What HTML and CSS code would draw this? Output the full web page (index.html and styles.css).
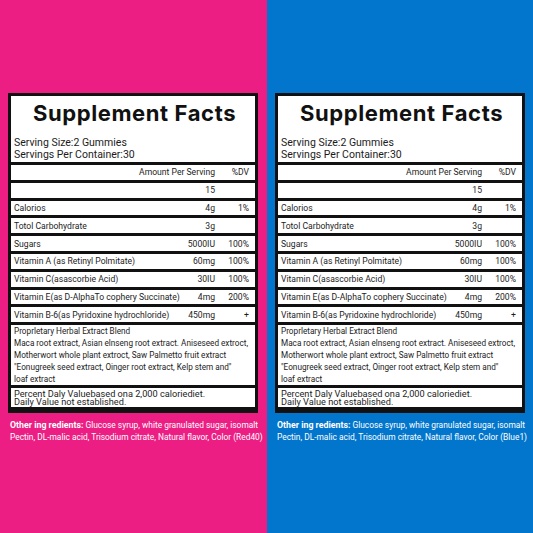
FILE: index.html
```html
<!DOCTYPE html>
<html lang="en">
<head>
    <meta charset="UTF-8">
    <meta name="viewport" content="width=device-width, initial-scale=1.0">
    <title>Supplement Facts</title>
    <link rel="stylesheet" href="styles.css">
</head>
<body>

<div class="page">
    <section class="half pink">
        <div class="facts">
            <div class="box head">
                <h1>Supplement Facts</h1>
                <p class="serving">Serving Size:2 Gummies<br>Servings Per Container:30</p>
            </div>
            <div class="box row"><span></span><span>Amount Per Serving</span><span>%DV</span></div>
            <div class="box row"><span></span><span>15</span><span></span></div>
            <div class="box row"><span>Calorios</span><span>4g</span><span>1%</span></div>
            <div class="box row"><span>Totol Carbohydrate</span><span>3g</span><span></span></div>
            <div class="box row"><span>Sugars</span><span>5000IU</span><span>100%</span></div>
            <div class="box row"><span>Vitamin A (as Retinyl Polmitate)</span><span>60mg</span><span>100%</span></div>
            <div class="box row"><span>Vitamin C(asascorbie Acid)</span><span>30IU</span><span>100%</span></div>
            <div class="box row"><span>Vitamin E(as D-AlphaTo cophery Succinate)</span><span>4mg</span><span>200%</span></div>
            <div class="box row"><span>Vitamin B-6(as Pyridoxine hydrochloride)</span><span>450mg</span><span>+</span></div>
            <div class="box blend">
                Proprletary Herbal Extract Blend<br>
                Maca root extract, Asian elnseng root extract. Aniseseed extroct,<br>
                Motherwort whole plant extroct, Saw Palmetto fruit extract<br>
                "Eonugreek seed extract, Oinger root extract, Kelp stem and"<br>
                loaf extract
            </div>
            <div class="box note">Percent Daly Valuebased ona 2,000 caloriediet.<br>Daily Value not established.</div>
        </div>
        <p class="other"><b>Other ing redients:</b> Glucose syrup, white granulated sugar, isomalt<br>Pectin, DL-malic acid, Trisodium citrate, Natural flavor, Color (Red40)</p>
    </section>

    <section class="half blue">
        <div class="facts">
            <div class="box head">
                <h1>Supplement Facts</h1>
                <p class="serving">Serving Size:2 Gummies<br>Servings Per Container:30</p>
            </div>
            <div class="box row"><span></span><span>Amount Per Serving</span><span>%DV</span></div>
            <div class="box row"><span></span><span>15</span><span></span></div>
            <div class="box row"><span>Calorios</span><span>4g</span><span>1%</span></div>
            <div class="box row"><span>Totol Carbohydrate</span><span>3g</span><span></span></div>
            <div class="box row"><span>Sugars</span><span>5000IU</span><span>100%</span></div>
            <div class="box row"><span>Vitamin A (as Retinyl Polmitate)</span><span>60mg</span><span>100%</span></div>
            <div class="box row"><span>Vitamin C(asascorbie Acid)</span><span>30IU</span><span>100%</span></div>
            <div class="box row"><span>Vitamin E(as D-AlphaTo cophery Succinate)</span><span>4mg</span><span>200%</span></div>
            <div class="box row"><span>Vitamin B-6(as Pyridoxine hydrochloride)</span><span>450mg</span><span>+</span></div>
            <div class="box blend">
                Proprletary Herbal Extract Blend<br>
                Maca root extract, Asian elnseng root extract. Aniseseed extroct,<br>
                Motherwort whole plant extroct, Saw Palmetto fruit extract<br>
                "Eonugreek seed extract, Oinger root extract, Kelp stem and"<br>
                loaf extract
            </div>
            <div class="box note">Percent Daly Valuebased ona 2,000 caloriediet.<br>Daily Value not established.</div>
        </div>
        <p class="other"><b>Other ing redients:</b> Glucose syrup, white granulated sugar, isomalt<br>Pectin, DL-malic acid, Trisodium citrate, Natural flavor, Color (Blue1)</p>
    </section>
</div>

</body>
</html>
```

FILE: styles.css
```css
* {
    box-sizing: border-box;
}
body {
    margin: 0;
    font-family: Roboto, "Noto Sans", sans-serif;
    color: #1c1c1c;
}
.page {
    display: flex;
    width: 533px;
    height: 533px;
}
.half {
    flex: none;
    width: 50%;
    min-width: 0;
    padding: 93px 8.5px 0 8px;
}
.pink {
    background-color: #ec1e84;
}
.blue {
    background-color: #0176cc;
    padding-left: 8.5px;
    padding-right: 8px;
}
.facts {
    background-color: #111;
    padding: 3px 3px 6px;
    display: flex;
    flex-direction: column;
    gap: 3px;
}
.box {
    background-color: #fff;
}
.head {
    height: 66px;
    padding-left: 3px;
}
.head h1 {
    margin: 1px 0 7px;
    text-align: center;
    font-family: Inter, "Noto Sans", sans-serif;
    font-size: 22px;
    font-weight: 700;
    letter-spacing: 0.6px;
    line-height: 33px;
    color: #111;
}
.serving {
    margin: 0;
    font-size: 10.5px;
    line-height: 12px;
}
.row {
    display: grid;
    grid-template-columns: 1fr auto 34px;
    align-items: center;
    height: 14.8px;
    padding: 0 6px 0 3px;
    font-size: 8.6px;
    white-space: nowrap;
}
.row span:nth-child(n+2) {
    text-align: right;
}
.blend {
    height: 60px;
    padding: 0 3px;
    font-size: 8.2px;
    line-height: 12px;
    white-space: nowrap;
}
.note {
    height: 18.8px;
    padding: 2px 3px 0;
    font-size: 9.2px;
    line-height: 7.5px;
}
.other {
    margin: 6px 0 0 2px;
    color: #fff;
    font-size: 8.4px;
    line-height: 12px;
    white-space: nowrap;
}
.other b {
    font-size: 8.8px;
}
```
